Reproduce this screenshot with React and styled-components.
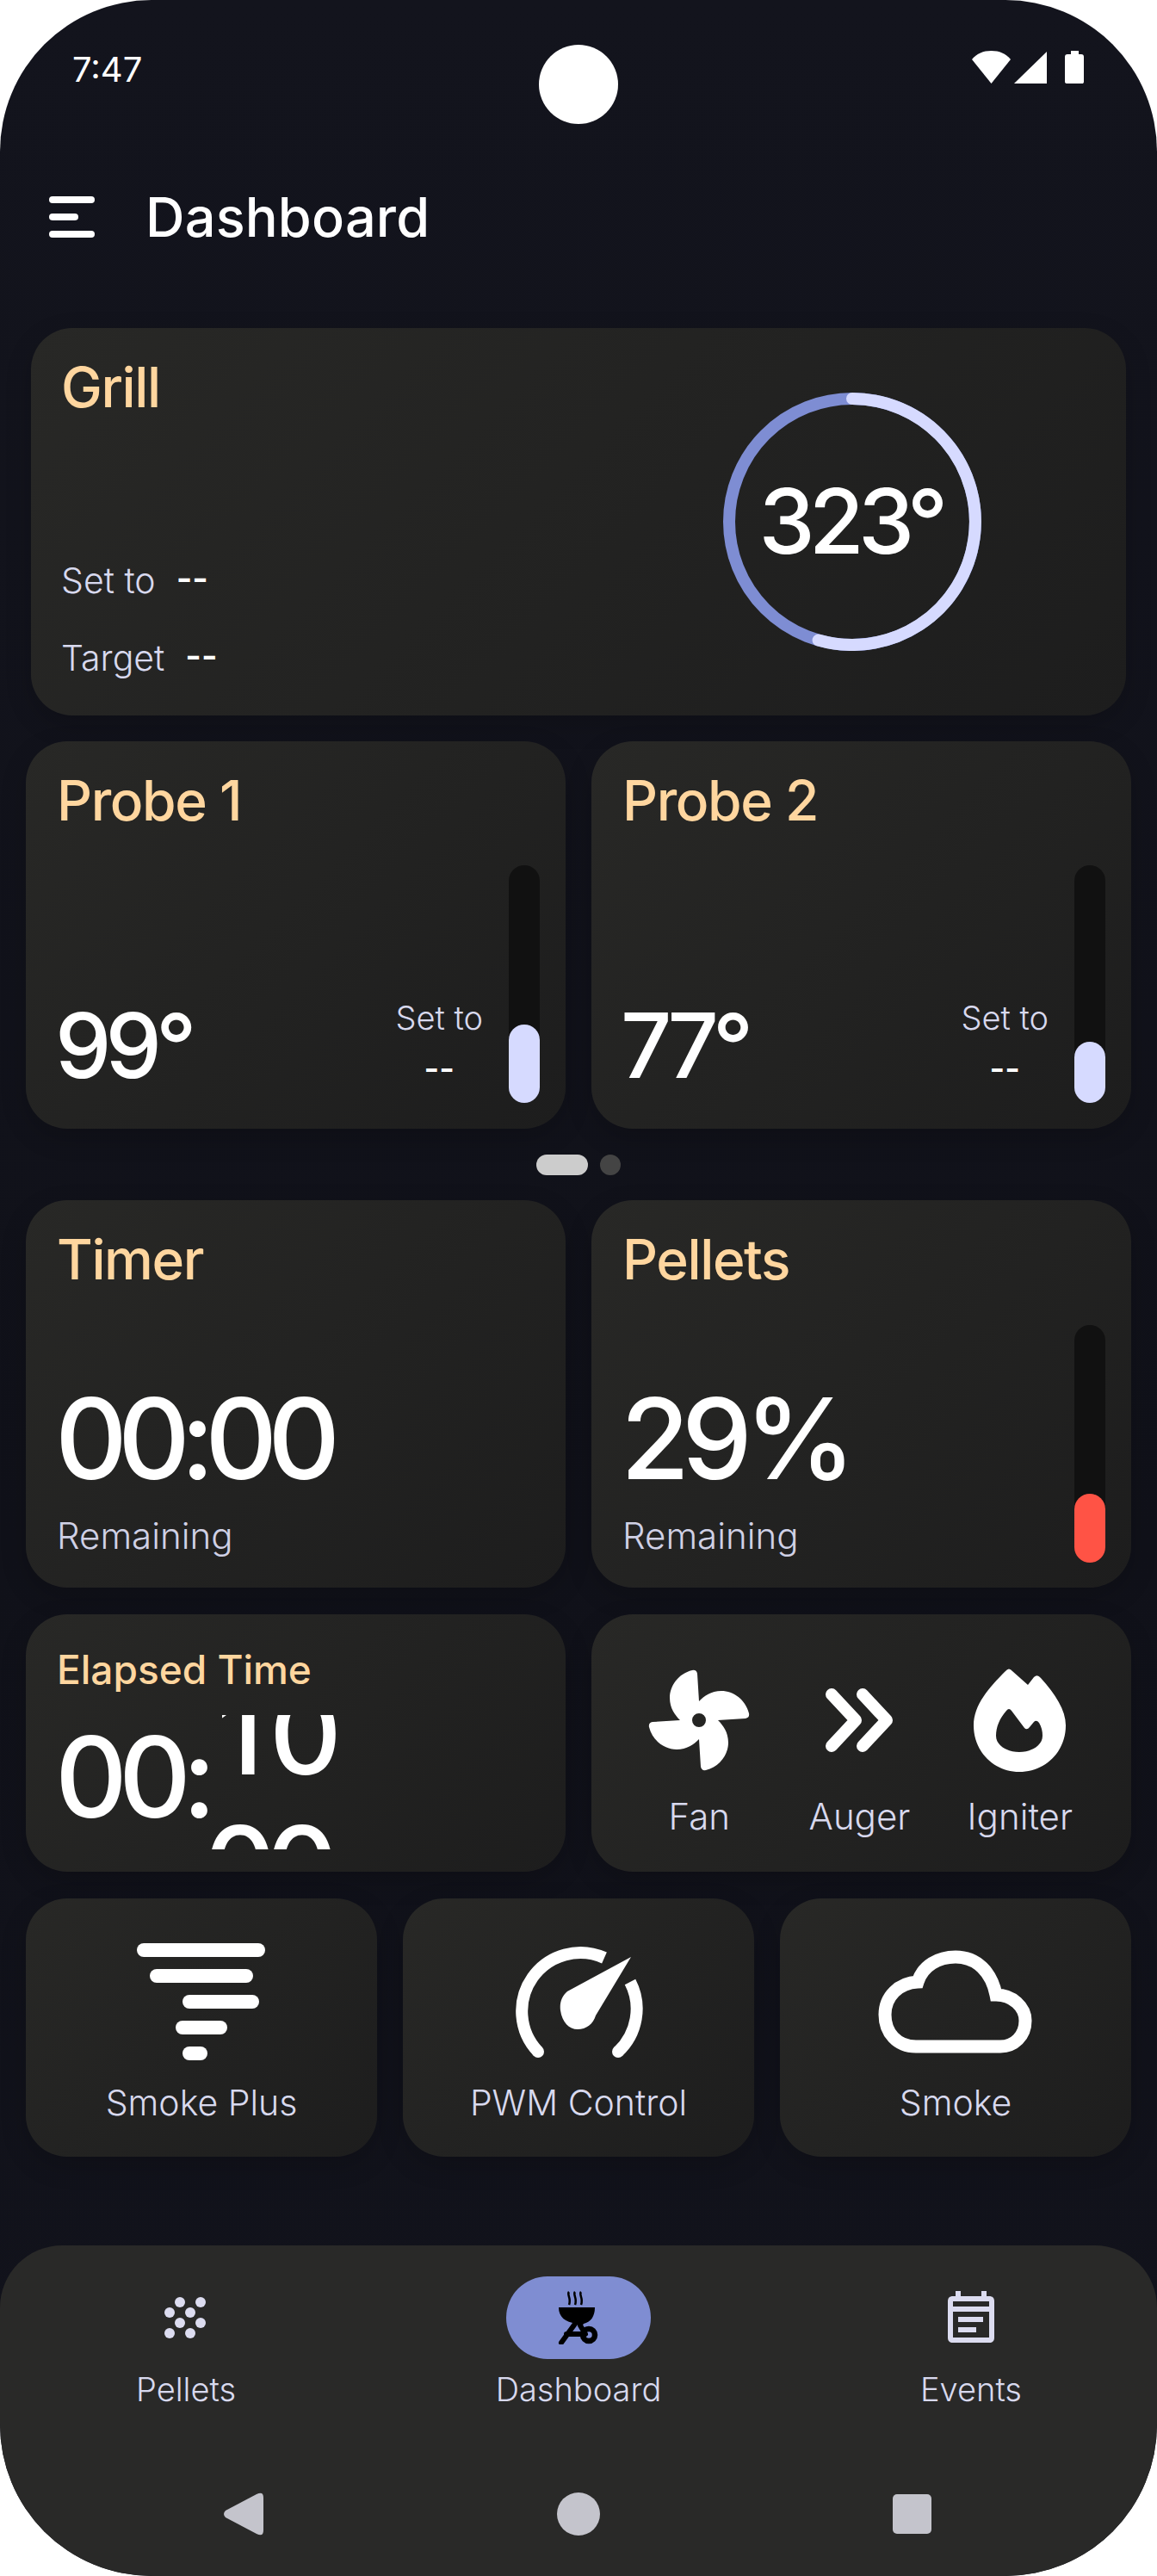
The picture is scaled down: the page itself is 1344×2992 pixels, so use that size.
import React from 'react';
import styled, { createGlobalStyle } from 'styled-components';

const Global = createGlobalStyle`
  html, body { margin: 0; padding: 0; background: #fff; }
  * { box-sizing: border-box; }
`;

const Screen = styled.div`
  width: 1344px;
  height: 2992px;
  border-radius: 176px;
  overflow: hidden;
  background: linear-gradient(180deg, #13141d 0%, #101119 60%, #12131c 100%);
  font-family: Inter, 'Noto Sans', sans-serif;
  color: #fff;
  display: flex;
  flex-direction: column;
`;

const StatusBar = styled.div`
  height: 218px;
  padding: 52px 84px 0;
  display: grid;
  grid-template-columns: 1fr 92px 1fr;
  align-items: start;
`;

const Clock = styled.div`
  font-size: 40px;
  line-height: 48px;
  margin-top: 5px;
`;

const Camera = styled.div`
  width: 92px;
  height: 92px;
  border-radius: 50%;
  background: #fff;
`;

const StatusIcons = styled.svg`
  justify-self: end;
  margin-top: 6px;
`;

const Header = styled.div`
  height: 68px;
  padding-left: 57px;
  display: flex;
  align-items: center;
  gap: 59px;
`;

const Burger = styled.div`
  display: flex;
  flex-direction: column;
  gap: 12px;
`;

const BurgerLine = styled.div`
  height: 8px;
  width: ${p => p.$w}px;
  border-radius: 4px;
  background: #fff;
`;

const PageTitle = styled.div`
  font-size: 63px;
  font-weight: 500;
  line-height: 68px;
  letter-spacing: 0.2px;
`;

const Content = styled.div`
  margin-top: 95px;
  padding: 0 30px;
  display: flex;
  flex-direction: column;
`;

const Card = styled.div`
  background: linear-gradient(135deg, #282826 0%, #1d1d1d 100%);
  border-radius: 48px;
  box-shadow: 0 10px 30px rgba(0, 0, 0, 0.18);
`;

const GrillCard = styled(Card)`
  margin: 0 6px;
  height: 450px;
  padding: 0 168px 0 35px;
  display: flex;
  justify-content: space-between;
`;

const GrillLeft = styled.div`
  display: flex;
  flex-direction: column;
`;

const CardTitle = styled.div`
  color: #ffd69f;
  font-size: ${p => (p.$small ? 46 : 64)}px;
  font-weight: 500;
  line-height: ${p => (p.$small ? 56 : 76)}px;
  letter-spacing: ${p => (p.$small ? 0 : -1.4)}px;
  margin-top: ${p => (p.$small ? 36 : 31)}px;
`;

const SetRow = styled.div`
  display: flex;
  align-items: center;
  gap: 24px;
  height: 40px;
  margin-top: ${p => p.$top}px;
`;

const SmallLabel = styled.span`
  color: #d8d9ee;
  font-size: 41px;
  font-weight: 300;
  line-height: 40px;
`;

const DashValue = styled.span`
  color: #fff;
  font-size: 40px;
  font-weight: 600;
  line-height: 40px;
  margin-top: -5px;
`;

const Ring = styled.div`
  margin-top: 75px;
  width: 300px;
  height: 300px;
  display: grid;
  place-items: center;
  & > * { grid-area: 1 / 1; }
`;

const RingValue = styled.div`
  font-size: 104px;
  font-weight: 500;
  line-height: 104px;
  letter-spacing: -7px;
  margin: -3px 4px 0 0;
`;

const Row = styled.div`
  display: grid;
  grid-template-columns: repeat(${p => p.$cols ?? 2}, 1fr);
  gap: 30px;
  margin-top: ${p => p.$top ?? 30}px;
`;

const HalfCard = styled(Card)`
  height: ${p => p.$h}px;
  padding: 0 30px 30px 36px;
  display: flex;
`;

const Main = styled.div`
  flex: 1;
  min-width: 0;
  display: flex;
  flex-direction: column;
`;

const ProbeBottom = styled.div`
  margin-top: auto;
  display: flex;
  justify-content: space-between;
  align-items: flex-end;
  padding-right: 30px;
`;

const ProbeValue = styled.div`
  font-size: 104px;
  font-weight: 500;
  line-height: 104px;
  letter-spacing: -7px;
  margin: 0 0 15px -2px;
`;

const SetCol = styled.div`
  display: flex;
  flex-direction: column;
  align-items: center;
  margin-bottom: 18px;
`;

const SetLabel = styled.div`
  color: #d8d9ee;
  font-size: 38px;
  font-weight: 300;
  line-height: 44px;
`;

const SetDash = styled.div`
  font-size: 38px;
  font-weight: 600;
  line-height: 44px;
  margin-top: 15px;
`;

const Track = styled.div`
  flex: none;
  width: 36px;
  height: 276px;
  margin-top: ${p => p.$top}px;
  border-radius: 18px;
  background: #111111;
  display: flex;
  flex-direction: column;
  justify-content: flex-end;
`;

const Fill = styled.div`
  height: ${p => p.$h}px;
  border-radius: 18px;
  background: ${p => p.$color};
`;

const Dots = styled.div`
  margin-top: 30px;
  display: flex;
  justify-content: center;
  gap: 14px;
`;

const Dot = styled.div`
  width: ${p => (p.$on ? 60 : 24)}px;
  height: 24px;
  border-radius: 12px;
  background: ${p => (p.$on ? '#cccccc' : '#444444')};
`;

const BigValue = styled.div`
  font-size: 130px;
  font-weight: 500;
  line-height: 130px;
  letter-spacing: ${p => p.$spacing}px;
  margin: 105px 0 0 -2px;
`;

const Remaining = styled.div`
  color: #d0d1e6;
  font-size: 42px;
  font-weight: 300;
  line-height: 50px;
  margin-top: 23px;
`;

const ClockRow = styled.div`
  display: flex;
  margin-top: 25px;
  height: 156px;
`;

const ClockStatic = styled.div`
  font-size: 130px;
  font-weight: 500;
  line-height: 156px;
  letter-spacing: -10px;
  margin: -6px 0 0 -2px;
  width: 181px;
  height: 156px;
  flex: none;
`;

const RollWindow = styled.div`
  height: 156px;
  overflow: hidden;
  width: 150px;
  flex: none;
`;

const RollStack = styled.div`
  margin-top: -55px;
`;

const RollLine = styled.div`
  display: flex;
  justify-content: flex-end;
  padding-right: ${p => p.$pad}px;
`;

const RollDigit = styled.div`
  width: 72px;
  text-align: center;
  font-size: 130px;
  font-weight: 500;
  line-height: 154px;
`;

const PartsCard = styled(Card)`
  height: 299px;
  padding: 0 36px 0 32px;
  display: grid;
  grid-template-columns: 1fr 1fr 1fr;
  align-items: start;
`;

const PartItem = styled.div`
  display: flex;
  flex-direction: column;
  align-items: center;
`;

const IconSlot = styled.div`
  height: 120px;
  margin-top: 63px;
  display: flex;
  align-items: center;
  justify-content: center;
`;

const PartLabel = styled.div`
  color: #d8d9ee;
  font-size: 42px;
  font-weight: 300;
  line-height: 50px;
  margin-top: 27px;
`;

const ActionCard = styled(Card)`
  height: 300px;
  display: flex;
  flex-direction: column;
  align-items: center;
`;

const ActionIcon = styled.div`
  height: 136px;
  margin-top: 52px;
  display: flex;
  align-items: center;
  justify-content: center;
`;

const ActionLabel = styled.div`
  color: #d8d9ee;
  font-size: 41px;
  font-weight: 300;
  line-height: 50px;
  margin-top: 24px;
`;

const NavWrap = styled.div`
  margin-top: auto;
  height: 384px;
  background: #292928;
  border-radius: 72px 72px 0 0;
  display: flex;
  flex-direction: column;
`;

const NavItems = styled.div`
  padding: 36px 132px 0;
  display: flex;
  justify-content: space-between;
`;

const NavItem = styled.div`
  width: 168px;
  display: flex;
  flex-direction: column;
  align-items: center;
`;

const NavPill = styled.div`
  width: 168px;
  height: 96px;
  border-radius: 48px;
  background: ${p => (p.$active ? '#7f8dd2' : 'transparent')};
  display: flex;
  align-items: center;
  justify-content: center;
`;

const NavLabel = styled.div`
  color: #d8d9ee;
  font-size: 38px;
  font-weight: 300;
  line-height: 44px;
  margin-top: 13px;
  white-space: nowrap;
`;

const SystemBar = styled.div`
  margin-top: 98px;
  padding: 0 260px;
  display: flex;
  align-items: center;
  justify-content: space-between;
`;

const HomeButton = styled.div`
  width: 50px;
  height: 50px;
  border-radius: 50%;
  background: #c4c4cc;
`;

const RecentsButton = styled.div`
  width: 45px;
  height: 46px;
  border-radius: 5px;
  background: #c4c4cc;
  margin-right: 2px;
`;

const WifiSignalBattery = () => (
  <StatusIcons width="132" height="40" viewBox="0 0 132 40" fill="#fff">
    <path d="M1 11C7 4 14 1 23.5 1S40 4 46 11L23.5 39Z" />
    <path d="M50 39L88 2V39Z" />
    <path d="M116 1H125V5H128C130 5 131 6 131 8V37C131 38.500 130 39 129 39H112C110 39 109 38.500 109 37V8C109 6 110 5 112 5H116Z" />
  </StatusIcons>
);

const TempRing = () => (
  <svg width="300" height="300" viewBox="0 0 300 300" fill="none" strokeWidth="14">
    <circle cx="150" cy="150" r="143" stroke="#7e8dd3" />
    <path d="M150,7 A143,143 0 1 1 110.600,287.500" stroke="#d6daff" strokeLinecap="round" />
  </svg>
);

const FanIcon = () => (
  <svg width="120" height="120" viewBox="-60 -60 120 120" fill="#fff" fillRule="evenodd">
    <path d="M0,-22 L-2,-54 Q-3,-59 -8,-58 C-24,-54 -34,-40 -34,-26 C-34,-14 -28,-6 -22,0 L-54,2 Q-59,3 -58,8 C-54,24 -40,34 -26,34 C-14,34 -6,28 0,22 L2,54 Q3,59 8,58 C24,54 34,40 34,26 C34,14 28,6 22,0 L54,-2 Q59,-3 58,-8 C54,-24 40,-34 26,-34 C14,-34 6,-28 0,-22 Z M8,0 A8,8 0 1 0 -8,0 A8,8 0 1 0 8,0 Z" />
  </svg>
);

const AugerIcon = () => (
  <svg width="80" height="74" viewBox="0 0 80 74" fill="none" stroke="#fff" strokeWidth="14" strokeLinecap="round" strokeLinejoin="round">
    <path d="M8,7 L36,37 L8,67" />
    <path d="M44,7 L72,37 L44,67" />
  </svg>
);

const FlameIcon = () => (
  <svg width="107" height="120" viewBox="0 0 107 120" fill="#fff" fillRule="evenodd">
    <path d="M37,3 Q41,-2 45,3 L63,19 L70,10 Q74,6 78,11 C95,30 107,48 107,66 C107,97 83,120 53,120 C24,120 0,97 0,66 C0,42 18,22 37,3 Z M38,49 Q41,45 44,49 L59,69 Q62,72 65,68 L70,62 Q73,59 76,63 C79,68 80,73 80,78 C80,89 68,97 53,97 C38,97 26,89 26,78 C26,68 30,58 38,49 Z" />
  </svg>
);

const TornadoIcon = () => (
  <svg width="150" height="136" viewBox="0 0 150 136" fill="#fff">
    <rect x="0" y="0" width="149" height="16" rx="8" />
    <rect x="15" y="30" width="120" height="16" rx="8" />
    <rect x="53" y="60" width="89" height="16" rx="8" />
    <rect x="45" y="90" width="60" height="16" rx="8" />
    <rect x="53" y="120" width="29" height="16" rx="8" />
  </svg>
);

const GaugeIcon = () => (
  <svg width="150" height="132" viewBox="0 0 150 132" fill="none">
    <path d="M28,124 A68,68 0 0 1 105,15" stroke="#fff" strokeWidth="14" />
    <path d="M135,43 A68,68 0 0 1 121,124" stroke="#fff" strokeWidth="14" />
    <circle cx="28" cy="124" r="7" fill="#fff" />
    <circle cx="121" cy="124" r="7" fill="#fff" />
    <path d="M136,14 L62,54 C55,60 53,68 54,76 C56,90 64,98 74,98 C84,98 92,92 95,82 Z" fill="#fff" />
  </svg>
);

const CloudIcon = () => (
  <svg width="180" height="120" viewBox="0 0 180 120" fill="none" stroke="#fff" strokeWidth="15">
    <path d="M44,112 C22,112 8,96 8,75 C8,54 24,38 46,37 C52,18 70,8 90,8 C115,8 132,26 137,52 C156,52 171,66 171,82 C171,100 158,112 142,112 Z" />
  </svg>
);

const PelletsNavIcon = () => (
  <svg width="50" height="50" viewBox="0 0 50 50" fill="#dcdcf0">
    {[[18, 7], [42, 7], [6, 19], [30, 19], [18, 31], [42, 31], [6, 43], [30, 43]].map(([cx, cy]) => (
      <circle key={`${cx}-${cy}`} cx={cx} cy={cy} r="6" />
    ))}
  </svg>
);

const GrillNavIcon = () => (
  <svg width="48" height="62" viewBox="0 0 48 62" fill="none">
    <path d="M13,1 C10,4 16,8 13,16 M20,1 C17,4 23,8 20,16 M27,1 C24,4 30,8 27,16" stroke="#000" strokeWidth="2.500" />
    <path d="M1,19 H43 C43,30 38,36 30,38 L27,42 L22,38 C8,36 1,30 1,19 Z" fill="#000" />
    <path d="M20,38 L4,60 M10,50 H30 M26,40 L32,50" stroke="#000" strokeWidth="6" strokeLinecap="round" />
    <circle cx="36" cy="51" r="7" stroke="#000" strokeWidth="6.500" />
  </svg>
);

const EventsNavIcon = () => (
  <svg width="56" height="62" viewBox="0 0 56 62" fill="#dcdcf0">
    <rect x="10" y="0" width="6" height="8" />
    <rect x="40" y="0" width="6" height="8" />
    <path fillRule="evenodd" d="M7,6 H49 C53,6 55,8 55,12 V54 C55,58 53,60 49,60 H7 C3,60 1,58 1,54 V12 C1,8 3,6 7,6 Z M7,12 V18 H49 V12 Z M7,24 V54 H49 V24 Z" />
    <rect x="13" y="30" width="29" height="6" />
    <rect x="13" y="42" width="21" height="6" />
  </svg>
);

const BackIcon = () => (
  <svg width="46" height="50" viewBox="0 0 46 50" fill="#c4c4cc">
    <path d="M2,21 L38,2 Q46,-2 46,6 V44 Q46,52 38,48 L2,29 Q-2,25 2,21 Z" />
  </svg>
);

const ProbeCard = ({ name, value, fill }) => (
  <HalfCard $h={450}>
    <Main>
      <CardTitle>{name}</CardTitle>
      <ProbeBottom>
        <ProbeValue>{value}</ProbeValue>
        <SetCol>
          <SetLabel>Set to</SetLabel>
          <SetDash>--</SetDash>
        </SetCol>
      </ProbeBottom>
    </Main>
    <Track $top={144}>
      <Fill $h={fill} $color="#d6daff" />
    </Track>
  </HalfCard>
);

const parts = [
  { label: 'Fan', icon: <FanIcon /> },
  { label: 'Auger', icon: <AugerIcon /> },
  { label: 'Igniter', icon: <FlameIcon /> },
];

const actions = [
  { label: 'Smoke Plus', icon: <TornadoIcon /> },
  { label: 'PWM Control', icon: <GaugeIcon /> },
  { label: 'Smoke', icon: <CloudIcon /> },
];

const navItems = [
  { label: 'Pellets', icon: <PelletsNavIcon /> },
  { label: 'Dashboard', icon: <GrillNavIcon />, active: true },
  { label: 'Events', icon: <EventsNavIcon /> },
];

export default function App() {
  return (
    <>
      <Global />
      <Screen>
        <StatusBar>
          <Clock>7:47</Clock>
          <Camera />
          <WifiSignalBattery />
        </StatusBar>
        <Header>
          <Burger>
            <BurgerLine $w={53} />
            <BurgerLine $w={34} />
            <BurgerLine $w={53} />
          </Burger>
          <PageTitle>Dashboard</PageTitle>
        </Header>
        <Content>
          <GrillCard>
            <GrillLeft>
              <CardTitle>Grill</CardTitle>
              <SetRow $top={166}>
                <SmallLabel>Set to</SmallLabel>
                <DashValue>--</DashValue>
              </SetRow>
              <SetRow $top={50}>
                <SmallLabel>Target</SmallLabel>
                <DashValue>--</DashValue>
              </SetRow>
            </GrillLeft>
            <Ring>
              <TempRing />
              <RingValue>323°</RingValue>
            </Ring>
          </GrillCard>
          <Row>
            <ProbeCard name="Probe 1" value="99°" fill={91} />
            <ProbeCard name="Probe 2" value="77°" fill={71} />
          </Row>
          <Dots>
            <Dot $on />
            <Dot />
          </Dots>
          <Row $top={29}>
            <HalfCard $h={450}>
              <Main>
                <CardTitle>Timer</CardTitle>
                <BigValue $spacing={-11}>00:00</BigValue>
                <Remaining>Remaining</Remaining>
              </Main>
            </HalfCard>
            <HalfCard $h={450}>
              <Main>
                <CardTitle>Pellets</CardTitle>
                <BigValue $spacing={-9}>29%</BigValue>
                <Remaining>Remaining</Remaining>
              </Main>
              <Track $top={145}>
                <Fill $h={80} $color="#ff5345" />
              </Track>
            </HalfCard>
          </Row>
          <Row $top={31}>
            <HalfCard $h={299}>
              <Main>
                <CardTitle $small>Elapsed Time</CardTitle>
                <ClockRow>
                  <ClockStatic>00:</ClockStatic>
                  <RollWindow>
                    <RollStack>
                      <RollLine $pad={10}>
                        <RollDigit>1</RollDigit>
                        <RollDigit>0</RollDigit>
                      </RollLine>
                      <RollLine $pad={14}>
                        <RollDigit>0</RollDigit>
                        <RollDigit>0</RollDigit>
                      </RollLine>
                    </RollStack>
                  </RollWindow>
                </ClockRow>
              </Main>
            </HalfCard>
            <PartsCard>
              {parts.map(p => (
                <PartItem key={p.label}>
                  <IconSlot>{p.icon}</IconSlot>
                  <PartLabel>{p.label}</PartLabel>
                </PartItem>
              ))}
            </PartsCard>
          </Row>
          <Row $top={31} $cols={3}>
            {actions.map(a => (
              <ActionCard key={a.label}>
                <ActionIcon>{a.icon}</ActionIcon>
                <ActionLabel>{a.label}</ActionLabel>
              </ActionCard>
            ))}
          </Row>
        </Content>
        <NavWrap>
          <NavItems>
            {navItems.map(n => (
              <NavItem key={n.label}>
                <NavPill $active={n.active}>{n.icon}</NavPill>
                <NavLabel>{n.label}</NavLabel>
              </NavItem>
            ))}
          </NavItems>
          <SystemBar>
            <BackIcon />
            <HomeButton />
            <RecentsButton />
          </SystemBar>
        </NavWrap>
      </Screen>
    </>
  );
}
